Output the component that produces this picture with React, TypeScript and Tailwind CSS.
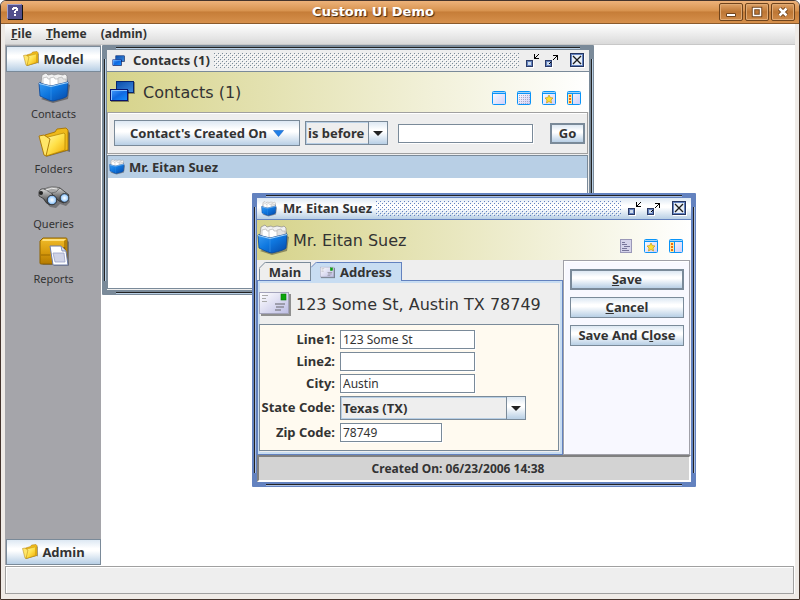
import { useState, type ReactNode } from "react";

const glossy =
  "bg-[linear-gradient(to_bottom,#dde8f3_0%,#ffffff_35%,#ffffff_45%,#b8cfe5_100%)]";
const headerBg = "bg-[linear-gradient(to_right,#d6d38a,#ffffff)]";
const fieldClass =
  "h-[19px] min-w-0 border border-[#7a8a99] bg-white px-[2px] text-[12px] leading-4 shadow-[1px_1px_0_#ffffff] outline-none";
const dotsActive =
  "bg-[conic-gradient(from_270deg_at_1px_1px,#6382bf_90deg,transparent_0),conic-gradient(from_270deg_at_1px_1px,#6382bf_90deg,transparent_0),conic-gradient(from_270deg_at_1px_1px,#ffffff_90deg,transparent_0),conic-gradient(from_270deg_at_1px_1px,#ffffff_90deg,transparent_0)]";
const dotsIdle =
  "bg-[conic-gradient(from_270deg_at_1px_1px,#7a8a99_90deg,transparent_0),conic-gradient(from_270deg_at_1px_1px,#7a8a99_90deg,transparent_0),conic-gradient(from_270deg_at_1px_1px,#ffffff_90deg,transparent_0),conic-gradient(from_270deg_at_1px_1px,#ffffff_90deg,transparent_0)]";

/* ---------- icons ---------- */

function FileBoxIcon({ size }: { size: number }) {
  return (
    <svg width={size} height={size} viewBox="0 0 32 32" className="shrink-0" aria-hidden="true">
      <defs>
        <linearGradient id="boxFront" x1="0" y1="0" x2="1" y2="1">
          <stop offset="0" stopColor="#3c9cf2" />
          <stop offset=".45" stopColor="#0f78e0" />
          <stop offset="1" stopColor="#0548a8" />
        </linearGradient>
      </defs>
      <path d="M3 27 L15 31 L30 27 L32 13 L30 12Z" fill="#000" opacity=".35" />
      <path d="M1 11 L6 8 L29 7 L30 11 L16 16Z" fill="#0a4fa8" />
      <path d="M3 11 L4 3 L8 1 L10 3 L14 2 L16 3 L20 2 L25 3 L27 2 L29 4 L29 10 L13 14Z" fill="#f1f1f1" stroke="#8a8a8a" strokeWidth=".7" />
      <path d="M5 12 L5 6 L9 5 L10 7 L13 7 L13 14Z" fill="#ffffff" stroke="#b5b5b5" strokeWidth=".7" />
      <path d="M12 13 L12 6 L16 5 L17 7 L21 7 L21 12 L14 14Z" fill="#ffffff" stroke="#b5b5b5" strokeWidth=".7" />
      <path d="M20 12 L20 6 L24 5 L25 7 L28 7 L28 11Z" fill="#e2e2e2" stroke="#b5b5b5" strokeWidth=".7" />
      <path d="M1 11 L13 14 L30 10 L29 24 Q28 26 15 29 Q12 29 2 24Z" fill="url(#boxFront)" stroke="#07459b" strokeWidth=".8" />
      <path d="M1 11.500 L13 14.500 L30 10.500" fill="none" stroke="#9fd2fb" strokeWidth="1.200" />
      <path d="M13 15 L13 28" stroke="#3d98ec" strokeWidth=".6" />
    </svg>
  );
}

function FolderIcon({ size }: { size: number }) {
  return (
    <svg width={size} height={size} viewBox="0 0 32 32" className="shrink-0" aria-hidden="true">
      <defs>
        <linearGradient id="folderFront" x1="0" y1="0" x2="1" y2="1">
          <stop offset="0" stopColor="#fffbb8" />
          <stop offset=".5" stopColor="#ffe14a" />
          <stop offset="1" stopColor="#efa800" />
        </linearGradient>
      </defs>
      <path d="M8 30 L29 24 L32 25 L32 6 L30 4Z" fill="#000" opacity=".35" />
      <path d="M7 8 L17 5 L19 2 L28 1 L30 3 L30 23 L26 24 L8 29Z" fill="#eeb91b" stroke="#a87400" strokeWidth=".9" />
      <path d="M6 11 L26 6 L27 7 L27 23 L8 29Z" fill="url(#folderFront)" stroke="#b98a05" strokeWidth=".8" />
      <path d="M1 9 L6 8 L12 12 L8 29 L6 28Z" fill="#ffe668" stroke="#a87400" strokeWidth=".9" />
    </svg>
  );
}

function BinocularsIcon() {
  return (
    <svg width="32" height="32" viewBox="0 0 32 32" className="shrink-0" aria-hidden="true">
      <defs>
        <radialGradient id="lens">
          <stop offset="0" stopColor="#ffffff" />
          <stop offset=".6" stopColor="#b7dcff" />
          <stop offset="1" stopColor="#5d9be0" />
        </radialGradient>
        <linearGradient id="barrel" x1="0" y1="0" x2="0" y2="1">
          <stop offset="0" stopColor="#dcdcdc" />
          <stop offset=".5" stopColor="#808080" />
          <stop offset="1" stopColor="#2e2e2e" />
        </linearGradient>
      </defs>
      <path d="M5 17 L12 25 L18 26 L22 22 L28 24 L32 20 L30 14Z" fill="#000" opacity=".3" />
      <path d="M1 10 Q2 6 7 7 L19 14 L12 23 Q7 21 6 17 L1 14Z" fill="url(#barrel)" stroke="#333" strokeWidth=".8" />
      <path d="M14 8 Q17 4 22 6 L31 13 L26 21 L21 19 L14 12Z" fill="url(#barrel)" stroke="#333" strokeWidth=".8" />
      <path d="M6 7 Q14 3 22 6 L18 10 L13 11Z" fill="#a8a8a8" stroke="#555" strokeWidth=".6" />
      <path d="M8 8 Q14 5 19 7" fill="none" stroke="#e8e8e8" />
      <circle cx="3" cy="11" r="2" fill="#222" />
      <circle cx="14" cy="18" r="4.800" fill="url(#lens)" stroke="#333" />
      <circle cx="26.500" cy="16" r="4.400" fill="url(#lens)" stroke="#333" />
    </svg>
  );
}

function ReportIcon() {
  return (
    <svg width="32" height="32" viewBox="0 0 32 32" className="shrink-0" aria-hidden="true">
      <defs>
        <linearGradient id="book" x1="0" y1="0" x2="0" y2="1">
          <stop offset="0" stopColor="#f0bc2a" />
          <stop offset=".55" stopColor="#d79a0c" />
          <stop offset="1" stopColor="#b47a00" />
        </linearGradient>
      </defs>
      <path d="M4 28 L31 28 L31 5 L29 3Z" fill="#000" opacity=".3" />
      <path d="M5 1 L28 1 Q29 1 29 2 L29 24 L26 27 L3 27 Q2 27 2 26 L2 4Z" fill="url(#book)" stroke="#8e6200" />
      <path d="M5 2 L28 2 L26 4 L4 4Z" fill="#ffe07a" />
      <path d="M26 4 L29 2 L29 24 L26 27Z" fill="#b88308" />
      <path d="M3 18 L12 18" fill="none" stroke="#9b6a00" />
      <path d="M14 13 L15 10 L27 10 L31 29 L16 29Z" fill="#000" opacity=".25" />
      <path d="M12 9 L23 9 L28 14 L30 28 L15 28Z" fill="#ffffff" stroke="#6c7ca8" />
      <path d="M23 9 L24 14 L28 14" fill="#d8dcf0" stroke="#6c7ca8" strokeWidth=".8" />
      <path d="M15 16 L26 16 L27 25 L17 25Z" fill="#cfd3e6" stroke="#9aa2c6" strokeWidth=".8" />
    </svg>
  );
}

function WindowsIcon({ size }: { size: number }) {
  return (
    <svg width={size} height={size} viewBox="0 0 32 32" className="shrink-0" aria-hidden="true">
      <defs>
        <linearGradient id="paneFront" x1="0" y1="0" x2="1" y2="1">
          <stop offset="0" stopColor="#4aa0ff" />
          <stop offset=".5" stopColor="#0f68e0" />
          <stop offset="1" stopColor="#1490ff" />
        </linearGradient>
        <linearGradient id="paneBack" x1="0" y1="0" x2="1" y2="1">
          <stop offset="0" stopColor="#0a4ba8" />
          <stop offset="1" stopColor="#3c8ae0" />
        </linearGradient>
      </defs>
      <rect x="10" y="6" width="18" height="12" fill="#000" opacity=".35" />
      <rect x="9.500" y="5.500" width="17" height="11" fill="url(#paneBack)" stroke="#06266e" />
      <rect x="4" y="14" width="18" height="12" fill="#000" opacity=".4" />
      <rect x="3.500" y="13.500" width="17" height="11" fill="url(#paneFront)" stroke="#07146e" />
      <path d="M4.500 24 L4.500 14.500 L20 14.500" fill="none" stroke="#8cc4ff" />
    </svg>
  );
}

function EnvelopeIcon({ size }: { size: number }) {
  return (
    <svg width={size} height={size} viewBox="0 0 32 32" className="shrink-0" aria-hidden="true">
      <defs>
        <linearGradient id="letter" x1="0" y1="0" x2="1" y2="1">
          <stop offset="0" stopColor="#ffffff" />
          <stop offset="1" stopColor="#bdbde4" />
        </linearGradient>
      </defs>
      <rect x="2" y="6" width="30" height="22" fill="#000" opacity=".4" />
      <rect x=".5" y="4.500" width="29" height="21" fill="url(#letter)" stroke="#a3a3bb" />
      <path d="M3 7.500 H9 M3 10.500 H7 M3 13.500 H8" stroke="#a9a9a9" />
      <rect x="22" y="6" width="5" height="6" fill="#0aa50a" stroke="#067806" strokeWidth=".6" />
      <path d="M16 16 H26 M17 19 H25 M16 22 H22" stroke="#8b8b96" strokeWidth="1.500" />
    </svg>
  );
}

type ViewKind = "blank" | "grid" | "star" | "side" | "page";

function ViewIcon({ kind }: { kind: ViewKind }) {
  if (kind === "page") {
    return (
      <svg width="14" height="14" viewBox="0 0 14 14" aria-hidden="true">
        <rect x="1.500" y=".5" width="11" height="13" fill="#d5d3ea" stroke="#9a98b8" />
        <path d="M3 3.500 H6 M3 5.500 H8 M5 7.500 H11 M3 9.500 H8 M3 11.500 H10" stroke="#77759a" />
      </svg>
    );
  }
  return (
    <svg width="14" height="14" viewBox="0 0 14 14" aria-hidden="true">
      <defs>
        <linearGradient id="viewPane" x1="0" y1="0" x2="1" y2="1">
          <stop offset="0" stopColor="#ffffff" />
          <stop offset="1" stopColor="#cfcff8" />
        </linearGradient>
      </defs>
      <rect x=".5" y=".5" width="13" height="13" rx="1" fill="url(#viewPane)" stroke="#0a94f8" />
      <rect x="1" y="1" width="12" height="1" fill="#9fd4fb" />
      <rect x="1" y="2" width="12" height="1" fill="#0a94f8" />
      {kind === "grid" && (
        <path
          d="M2 4.500 H13 M2 6.500 H13 M2 8.500 H13 M2 10.500 H13 M2 12.500 H13"
          stroke="#a9a9c9"
          strokeDasharray="1 1"
        />
      )}
      {kind === "star" && (
        <path
          d="M7 4 L8.300 6.600 L11 7 L9 9 L9.500 12 L7 10.500 L4.500 12 L5 9 L3 7 L5.700 6.600Z"
          fill="#ffe032"
          stroke="#c39a1c"
          strokeWidth=".7"
        />
      )}
      {kind === "side" && (
        <>
          <rect x="1" y="3" width="4" height="10" fill="#ffe9a0" />
          <path d="M3 4 V6 M3 7 V9 M3 10 V12" stroke="#f06a10" strokeWidth="2" />
          <path d="M5.500 3 V13" stroke="#0a94f8" />
        </>
      )}
    </svg>
  );
}

function ViewButton({ kind, label }: { kind: ViewKind; label: string }) {
  return (
    <button type="button" aria-label={label} className="block">
      <ViewIcon kind={kind} />
    </button>
  );
}

/* ---------- internal frames ---------- */

function FrameButtons() {
  return (
    <div className="flex shrink-0 items-center">
      <button type="button" aria-label="Minimize" className="mr-[5px] block">
        <svg width="14" height="16" viewBox="0 0 14 16" shapeRendering="crispEdges" aria-hidden="true">
          <rect x="1" y="8" width="7" height="7" fill="#fff" />
          <rect x=".5" y="7.500" width="6" height="6" fill="#cfdcec" stroke="#2b3a66" />
          <rect x="1.500" y="8.500" width="4" height="4" fill="none" stroke="#6382bf" />
          <path d="M8 1 H9 V5 H13 V6 H8Z M9 4 H10 V3 H11 V2 H12 V1 H13 V2 H12 V3 H11 V4 H10 V5 H9Z" fill="#000" />
        </svg>
      </button>
      <button type="button" aria-label="Maximize" className="mr-[11px] block">
        <svg width="14" height="16" viewBox="0 0 14 16" shapeRendering="crispEdges" aria-hidden="true">
          <rect x="1" y="8" width="7" height="7" fill="#fff" />
          <rect x=".5" y="7.500" width="6" height="6" fill="#cfdcec" stroke="#2b3a66" />
          <rect x="1.500" y="8.500" width="4" height="4" fill="none" stroke="#6382bf" />
          <path d="M8 2 H13 V7 H12 V3 H8Z M11 3 H12 V4 H11Z M10 4 H11 V5 H10Z M9 5 H10 V6 H9Z M8 6 H9 V7 H8Z M4 10 H5 V11 H4Z M5 9 H6 V10 H5Z" fill="#000" />
        </svg>
      </button>
      <button type="button" aria-label="Close" className="mr-1 block">
        <svg width="15" height="15" viewBox="0 0 15 15" aria-hidden="true">
          <rect x="1" y="1" width="14" height="14" fill="#fff" />
          <rect x=".5" y=".5" width="13" height="13" fill="#e8eff7" stroke="#24345f" />
          <rect x="1.500" y="1.500" width="11" height="11" fill="none" stroke="#6382bf" />
          <path d="M3 3 L11 11 M11 3 L3 11" stroke="#1b1b1b" strokeWidth="1.300" />
        </svg>
      </button>
    </div>
  );
}

function InternalFrame({
  active,
  title,
  icon,
  place,
  children,
}: {
  active: boolean;
  title: string;
  icon: ReactNode;
  place: string;
  children: ReactNode;
}) {
  const light = active ? "bg-[#a9bde0]" : "bg-[#b8cfe5]";
  return (
    <section
      aria-label={title}
      className={`absolute flex flex-col rounded-[1px] border-[5px] ${
        active ? "border-[#6382bf]" : "border-[#7a8a99]"
      } ${place}`}
    >
      <div className="pointer-events-none absolute inset-x-[9px] -top-[3px] h-px bg-[#222]" />
      <div className={`pointer-events-none absolute inset-x-[9px] -top-[2px] h-px ${light}`} />
      <div className="pointer-events-none absolute inset-x-[9px] -bottom-[3px] h-px bg-[#222]" />
      <div className={`pointer-events-none absolute inset-x-[9px] -bottom-[4px] h-px ${light}`} />
      <div className="pointer-events-none absolute inset-y-[9px] -left-[3px] w-px bg-[#222]" />
      <div className={`pointer-events-none absolute inset-y-[9px] -left-[2px] w-px ${light}`} />
      <div className="pointer-events-none absolute inset-y-[9px] -right-[3px] w-px bg-[#222]" />
      <div className={`pointer-events-none absolute inset-y-[9px] -right-[4px] w-px ${light}`} />
      <header
        className={`flex h-[22px] shrink-0 items-center border-b ${
          active ? `border-[#6382bf] ${glossy}` : "border-[#7a8a99] bg-[#eeeeee]"
        }`}
      >
        <span className="ml-1 flex">{icon}</span>
        <h2 className="mr-1 ml-[6px] pb-[2px] text-[13px] leading-4 font-bold whitespace-nowrap">{title}</h2>
        <span
          className={`mr-[7px] h-[15px] min-w-0 flex-1 bg-[length:4px_4px] bg-[position:0_0,2px_2px,1px_1px,3px_3px] ${
            active ? dotsActive : dotsIdle
          }`}
        />
        <FrameButtons />
      </header>
      {children}
    </section>
  );
}

function FrameHeading({ icon, text, children }: { icon: ReactNode; text: string; children: ReactNode }) {
  return (
    <div className={`flex h-10 shrink-0 items-center ${headerBg}`}>
      {icon}
      <h3 className="ml-1 flex-1 pt-[2px] font-['DejaVu_Sans',sans-serif] text-[16px] whitespace-nowrap">{text}</h3>
      <div className="mr-2 flex gap-[11px] self-end pb-[7px]">{children}</div>
    </div>
  );
}

function SelectBox({
  id,
  label,
  value,
  className,
}: {
  id: string;
  label?: string;
  value: string;
  className: string;
}) {
  return (
    <div className={`relative h-6 ${className}`}>
      <select
        id={id}
        aria-label={label}
        className="block h-6 w-full appearance-none border border-[#7a8a99] bg-[#eeeeee] pr-5 pl-[2px] text-[13px] leading-4 font-bold shadow-[inset_0_0_0_1px_#b8cfe5] outline-none"
      >
        <option>{value}</option>
      </select>
      <span
        className={`pointer-events-none absolute inset-y-0 right-0 flex w-5 items-center justify-center border border-[#7a8a99] ${glossy}`}
      >
        <svg width="10" height="5" viewBox="0 0 10 5" aria-hidden="true">
          <path d="M0 0 H10 L5 5Z" fill="#222" />
        </svg>
      </span>
    </div>
  );
}

function ContactsFrame() {
  return (
    <InternalFrame
      active={false}
      title="Contacts (1)"
      icon={<WindowsIcon size={16} />}
      place="left-px top-0 h-[250px] w-[492px]"
    >
      <FrameHeading icon={<WindowsIcon size={32} />} text="Contacts (1)">
        <ViewButton kind="blank" label="Form view" />
        <ViewButton kind="grid" label="Table view" />
        <ViewButton kind="star" label="Favorites" />
        <ViewButton kind="side" label="Side panel" />
      </FrameHeading>
      <div className="flex flex-1 flex-col bg-[#eeeeee] pr-px">
        <form
          onSubmit={(e) => e.preventDefault()}
          className="flex h-[42px] shrink-0 items-center border border-[#a0a0a0] pr-[2px] pl-[6px] shadow-[inset_1px_1px_0_#fff]"
        >
          <button
            type="button"
            className={`flex h-[26px] w-[186px] items-center justify-center gap-[6px] border border-[#7a8a99] text-[13px] leading-4 font-bold ${glossy}`}
          >
            Contact's Created On
            <svg width="11" height="7" viewBox="0 0 11 7" aria-hidden="true">
              <path d="M.5 .5 H10.500 L5.500 6.500Z" fill="#1f7fe8" stroke="#1461c4" strokeWidth=".6" />
            </svg>
          </button>
          <SelectBox id="operator" label="Operator" value="is before" className="ml-[5px] w-[83px]" />
          <input aria-label="Date" className={`ml-[10px] w-[135px] ${fieldClass}`} />
          <button
            type="submit"
            className={`ml-auto h-[21px] w-[35px] border-2 border-[#7a8a99] text-[13px] leading-4 font-bold ${glossy}`}
          >
            Go
          </button>
        </form>
        <ul className="mt-px mb-px flex-1 border border-[#7a8a99] bg-white">
          <li className="flex h-[22px] items-center gap-1 bg-[#b8cfe5] pl-px text-[13px] leading-4 font-bold">
            <FileBoxIcon size={16} />
            <span>Mr. Eitan Suez</span>
          </li>
        </ul>
      </div>
    </InternalFrame>
  );
}

function FormLabel({ htmlFor, text }: { htmlFor: string; text: string }) {
  return (
    <label htmlFor={htmlFor} className="pb-[2px] text-right text-[13px] leading-4 font-bold whitespace-nowrap">
      {text}
    </label>
  );
}

function ActionButton({ primary, children }: { primary?: boolean; children: ReactNode }) {
  return (
    <button
      type="button"
      className={`flex h-[21px] w-full items-center justify-center border-[#7a8a99] text-[13px] leading-4 font-bold whitespace-nowrap ${
        primary ? "border-2" : "border"
      } ${glossy}`}
    >
      <span className="pb-[2px]">{children}</span>
    </button>
  );
}

function ContactFrame() {
  const [line1, setLine1] = useState("123 Some St");
  const [line2, setLine2] = useState("");
  const [city, setCity] = useState("Austin");
  const [zip, setZip] = useState("78749");
  return (
    <InternalFrame
      active
      title="Mr. Eitan Suez"
      icon={<FileBoxIcon size={16} />}
      place="left-[151px] top-[148px] h-[294px] w-[444px]"
    >
      <FrameHeading icon={<FileBoxIcon size={32} />} text="Mr. Eitan Suez">
        <ViewButton kind="page" label="Form view" />
        <ViewButton kind="star" label="Favorites" />
        <ViewButton kind="side" label="Side panel" />
      </FrameHeading>
      <div className="flex min-h-0 flex-1 bg-[#eeeeee]">
        <div className="flex min-w-0 flex-1 flex-col">
          <div role="tablist" className="flex h-5 items-end pt-[2px] pl-[2px]">
            <button
              type="button"
              role="tab"
              aria-selected="false"
              className="relative h-[18px] w-[52px] border-t border-r border-l border-[#7a8a99] text-[13px] leading-4 font-bold"
            >
              Main
              <svg width="7" height="7" viewBox="0 0 7 7" className="absolute -top-px -left-px" aria-hidden="true">
                <path d="M0 0 H7 L0 7Z" fill="#eee" />
                <path d="M0 6.500 L6.500 0" stroke="#7a8a99" />
              </svg>
            </button>
            <button
              type="button"
              role="tab"
              aria-selected="true"
              className="relative z-10 -mb-px flex h-[19px] w-[91px] items-center justify-center gap-[5px] border-t border-r border-[#6382bf] bg-[#c8ddf2] text-[13px] leading-4 font-bold"
            >
              <EnvelopeIcon size={15} />
              <span className="pb-px">Address</span>
              <svg width="6" height="6" viewBox="0 0 6 6" className="absolute -top-px left-0" aria-hidden="true">
                <path d="M0 0 H6 L0 6Z" fill="#eee" />
                <path d="M0 5.500 L5.500 0" stroke="#6382bf" />
              </svg>
            </button>
          </div>
          <div
            role="tabpanel"
            className="flex min-h-0 flex-1 flex-col border border-[#6382bf] shadow-[inset_0_0_0_2px_#c8ddf2]"
          >
            <div className="mt-[2px] mr-[3px] mb-[3px] ml-px flex flex-1 flex-col">
              <div className="flex h-[41px] items-center gap-[5px]">
                <EnvelopeIcon size={32} />
                <h4 className="pt-[2px] font-['DejaVu_Sans',sans-serif] text-[16px] whitespace-nowrap">
                  123 Some St, Austin TX 78749
                </h4>
              </div>
              <form
                onSubmit={(e) => e.preventDefault()}
                className="grid flex-1 grid-cols-[75px_1fr] content-start items-center gap-x-[5px] gap-y-[3px] border border-[#7a8a99] bg-[#fffaf0] pt-[5px]"
              >
                <FormLabel htmlFor="line1" text="Line1:" />
                <input id="line1" value={line1} onChange={(e) => setLine1(e.target.value)} className={`w-[135px] ${fieldClass}`} />
                <FormLabel htmlFor="line2" text="Line2:" />
                <input id="line2" value={line2} onChange={(e) => setLine2(e.target.value)} className={`w-[135px] ${fieldClass}`} />
                <FormLabel htmlFor="city" text="City:" />
                <input id="city" value={city} onChange={(e) => setCity(e.target.value)} className={`w-[135px] ${fieldClass}`} />
                <FormLabel htmlFor="state" text="State Code:" />
                <SelectBox id="state" value="Texas (TX)" className="w-[186px]" />
                <FormLabel htmlFor="zip" text="Zip Code:" />
                <input id="zip" value={zip} onChange={(e) => setZip(e.target.value)} className={`w-[102px] ${fieldClass}`} />
              </form>
            </div>
          </div>
        </div>
        <div className="mr-px flex w-[127px] shrink-0 flex-col gap-[7px] border border-[#a0a0a8] bg-[#f8f8ff] pt-2 pr-[5px] pl-[6px] shadow-[inset_1px_1px_0_#fff]">
          <ActionButton primary>
            <u>S</u>ave
          </ActionButton>
          <ActionButton>
            <u>C</u>ancel
          </ActionButton>
          <ActionButton>
            Save And C<u>l</u>ose
          </ActionButton>
        </div>
      </div>
      <footer className="flex h-[27px] shrink-0 items-center justify-center border-2 border-t-[#808080] border-r-white border-b-white border-l-[#808080] bg-[#d3d3d3] pr-8 text-[12px] leading-4 font-bold">
        Created On: 06/23/2006 14:38
      </footer>
    </InternalFrame>
  );
}

/* ---------- desktop shell ---------- */

function WindowButton({ label, children }: { label: string; children: ReactNode }) {
  return (
    <button
      type="button"
      aria-label={label}
      className="flex h-[18px] w-6 items-center justify-center rounded-[2px] border border-[#70441c] bg-[linear-gradient(to_bottom,#dfa368,#bd7634_50%,#cf8a48)] shadow-[inset_0_0_0_1px_#e0aa74]"
    >
      <svg width="12" height="12" viewBox="0 0 12 12" aria-hidden="true">
        {children}
      </svg>
    </button>
  );
}

function SideItem({ label, children }: { label: string; children: ReactNode }) {
  return (
    <button type="button" className="flex h-[55px] w-full flex-col items-center text-[11px] leading-4">
      {children}
      <span className="mt-[2px]">{label}</span>
    </button>
  );
}

function SideHeading({ label }: { label: string }) {
  return (
    <button
      type="button"
      className={`flex h-[26px] w-full shrink-0 items-center justify-center gap-1 border border-[#7a8a99] text-[13px] font-bold ${glossy}`}
    >
      <FolderIcon size={16} />
      <span className="pt-px">{label}</span>
    </button>
  );
}

export default function App() {
  return (
    <div className="flex h-screen w-full flex-col overflow-hidden rounded-t-[6px] border border-[#44342c] bg-[#efebe7] font-['Noto_Sans',sans-serif] text-[#333333]">
      <header className="flex h-[23px] shrink-0 items-center border-b border-[#8a5a2c] bg-[linear-gradient(to_bottom,#edb27a_0%,#d8934f_45%,#c67d38_50%,#d6904c_100%)] pr-1 pl-[6px]">
        <svg width="16" height="16" viewBox="0 0 16 16" aria-hidden="true">
          <rect x="1" y="1" width="15" height="15" fill="#111" />
          <rect width="15" height="15" fill="#52508c" />
          <path d="M0 0 H15 L14 1 H1 V14 L0 15Z" fill="#a5a3cc" />
          <path d="M5 6 V4 H6 V3 H10 V4 H11 V7 H9 V9 H7 V7 H8 V6 H9 V5 H7 V6Z M7 10 H9 V12 H7Z" fill="#fff" />
        </svg>
        <h1 className="flex-1 pl-1 text-center font-['DejaVu_Sans',sans-serif] text-[13px] font-bold text-white [text-shadow:1px_1px_1px_#40260f]">
          Custom UI Demo
        </h1>
        <div className="flex gap-[2px]">
          <WindowButton label="Minimize">
            <path d="M1.500 7.500 H10.500 V10.500 H1.500Z" fill="#fff" stroke="#70441c" />
          </WindowButton>
          <WindowButton label="Maximize">
            <path d="M2.500 2.500 H9.500 V9.500 H2.500Z" fill="none" stroke="#70441c" strokeWidth="3.500" />
            <path d="M2.500 2.500 H9.500 V9.500 H2.500Z" fill="none" stroke="#fff" strokeWidth="1.500" />
          </WindowButton>
          <WindowButton label="Close">
            <path d="M2.500 2.500 L9.500 9.500 M9.500 2.500 L2.500 9.500" stroke="#70441c" strokeWidth="4.500" />
            <path d="M2.500 2.500 L9.500 9.500 M9.500 2.500 L2.500 9.500" stroke="#fff" strokeWidth="2.500" />
          </WindowButton>
        </div>
      </header>
      <div className="mx-1 mb-[5px] flex min-h-0 flex-1 flex-col bg-white">
        <nav className="flex h-[21px] shrink-0 items-center gap-[14px] border-b border-[#c8c8c8] bg-[linear-gradient(to_bottom,#ffffff,#dadada)] pl-[6px] text-[12px] font-bold">
          <button type="button">
            <u>F</u>ile
          </button>
          <button type="button">
            <u>T</u>heme
          </button>
          <button type="button">(admin)</button>
        </nav>
        <div className="flex min-h-0 flex-1">
          <aside className="flex w-24 shrink-0 flex-col bg-[#a5a5aa] pt-px pl-px">
            <SideHeading label="Model" />
            <div className="flex-1">
              <SideItem label="Contacts">
                <FileBoxIcon size={32} />
              </SideItem>
              <SideItem label="Folders">
                <FolderIcon size={32} />
              </SideItem>
              <SideItem label="Queries">
                <BinocularsIcon />
              </SideItem>
              <SideItem label="Reports">
                <ReportIcon />
              </SideItem>
            </div>
            <SideHeading label="Admin" />
          </aside>
          <main className="relative min-w-0 flex-1 overflow-hidden bg-white">
            <ContactsFrame />
            <ContactFrame />
          </main>
        </div>
        <footer className="mt-px mr-px h-7 shrink-0 border border-[#a0a0a0] bg-[#eeeeee] shadow-[inset_1px_1px_0_#fff]" />
      </div>
    </div>
  );
}
